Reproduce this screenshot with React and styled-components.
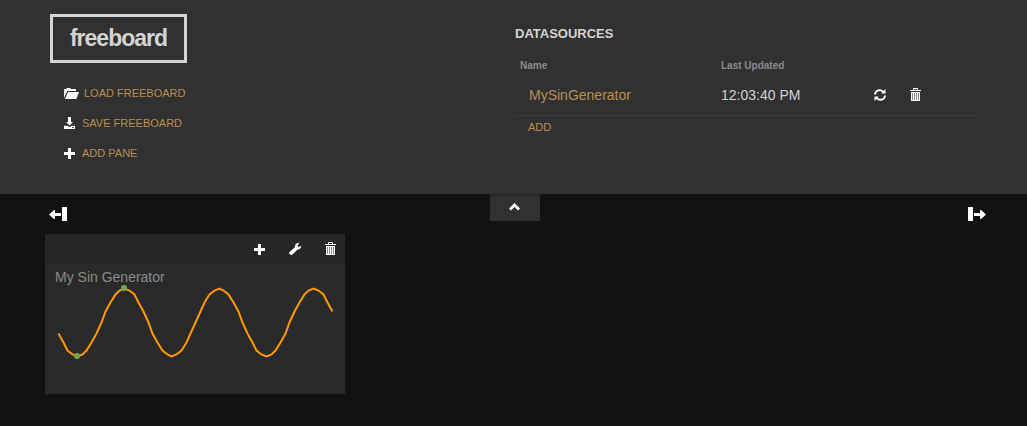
import React from "react";
import styled, { createGlobalStyle } from "styled-components";

const Global = createGlobalStyle`
  * { box-sizing: border-box; }
  body {
    margin: 0;
    background: #101214;
    color: #d3d4d4;
    font-family: "Liberation Sans", Arial, Helvetica, sans-serif;
    font-size: 14px;
    line-height: 20px;
    overflow: hidden;
  }
  svg { display: block; flex: none; }
`;

const Page = styled.div`
  height: 426px;
  background: #101214;
`;

const AdminBar = styled.header`
  display: flex;
  height: 194px;
  padding: 14px 47px 0 50px;
  background: #313131;
`;

const Tools = styled.div`
  width: 465px;
`;

const Logo = styled.h1`
  display: flex;
  align-items: center;
  justify-content: center;
  width: 137px;
  height: 49px;
  margin: 0 0 20px;
  padding: 0 0 1px;
  border: 3px solid #d3d4d4;
  font-size: 23px;
  font-weight: bold;
  letter-spacing: -1px;
`;

const Menu = styled.ul`
  margin: 0;
  padding: 0 0 0 14px;
  list-style: none;
`;

const MenuItem = styled.li`
  display: flex;
  align-items: center;
  gap: ${(p) => p.$gap}px;
  height: 20px;
  margin-bottom: 10px;
  color: #b88f51;
  font-size: 11px;
`;

const Sources = styled.section`
  width: 465px;
`;

const Heading = styled.h2`
  margin: 10px 0 12px;
  font-size: 13px;
  line-height: 20px;
`;

const Row = styled.div`
  display: grid;
  grid-template-columns: 206px 153px 36px 1fr;
  align-items: center;
`;

const HeadRow = styled(Row)`
  height: 19px;
  padding-left: 5px;
  grid-template-columns: 201px 1fr;
  color: #8b8b8b;
  font-size: 10px;
  font-weight: bold;
`;

const SourceRow = styled(Row)`
  height: 41px;
  border-bottom: 1px solid #3d3d3d;
`;

const SourceName = styled.span`
  padding-left: 14px;
  color: #b88f51;
`;

const AddLink = styled.div`
  padding: 1px 0 0 13px;
  color: #b88f51;
  font-size: 11px;
`;

const Controls = styled.div`
  display: grid;
  grid-template-columns: 441px 50px 1fr;
  height: 40px;
  padding: 0 41px 0 49px;
`;

const ColumnTool = styled.div`
  justify-self: ${(p) => (p.$end ? "end" : "start")};
  padding-top: 13px;
`;

const Toggle = styled.div`
  display: flex;
  justify-content: center;
  height: 27px;
  padding: 9px 1px 0 0;
  background: linear-gradient(#262626, #313131 4px);
`;

const Pane = styled.section`
  width: 300px;
  height: 160px;
  margin-left: 45px;
  background: #2a2a2a;
`;

const PaneHeader = styled.header`
  display: flex;
  align-items: center;
  justify-content: flex-end;
  height: 30px;
  padding-right: 9px;
  background: #272727;
`;

const PaneTool = styled.span`
  display: flex;
  justify-content: flex-start;
  width: ${(p) => p.$width}px;
`;

const WidgetTitle = styled.h3`
  margin: 0;
  padding: 3px 10px 0;
  color: #8b8b8b;
  font-size: 14px;
  font-weight: normal;
`;

const Chart = styled.svg`
  margin-left: 10px;
  overflow: visible;
`;

function Folder() {
  return (
    <svg width="15" height="11" viewBox="0 0 15 11" fill="#fff">
      <path d="M0 10V1.5L1 1h1l1-1h3l1 1h4.500l.5.5V3H3.200z" />
      <path d="M4 4h11l-2.700 7H1z" />
    </svg>
  );
}

function Save() {
  return (
    <svg width="11" height="12" viewBox="0 0 11 12" fill="#fff">
      <path d="M4 0h3v5h2L5.500 8.500 2 5h2z" />
      <path fillRule="evenodd" d="M0 8.800h3.300l1.200 1h2l1.200-1H11V12H0zM8 10v1h1.500v-1z" />
    </svg>
  );
}

function Plus() {
  return (
    <svg width="11" height="11" viewBox="0 0 11 11" fill="#fff">
      <path d="M4 0h3v4h4v3H7v4H4V7H0V4h4z" />
    </svg>
  );
}

function Trash() {
  return (
    <svg width="11" height="14" viewBox="0 0 11 14" fill="#fff">
      <path fillRule="evenodd" d="M3 2V.7L3.700 0h3.600L8 .7V2h3v1H0V2zM4 2h3V1H4z" />
      <path d="M1 4h9v9H1z" />
      <path d="M2 5h1v7H2zM4 5h1v7H4zM6 5h1v7H6zM8 5h1v7H8z" fill="#8c8c8c" />
    </svg>
  );
}

function Refresh() {
  return (
    <svg width="12" height="12" viewBox="0 0 12 12">
      <path d="M1 5.500C1.300 1.300 6.500-.3 9.300 2.900M11 6.500C10.700 10.700 5.500 12.300 2.700 9.100" fill="none" stroke="#fff" strokeWidth="1.900" />
      <path d="M11.500 0v4.500H7.200zM.5 12V7.500h4.300z" fill="#fff" />
    </svg>
  );
}

function Wrench() {
  return (
    <svg width="13" height="12" viewBox="0 0 13 12" fill="#fff">
      <path d="M10.400.3 8.600 2.200 9 3.600 10.400 3.900 12.100 2.500C12.400 5 10.600 6.700 8.500 6.500L3.500 11.400C1.800 12.800-.8 10.900.5 9L5.900 4.200C5.700 1.500 8-.5 10.400.3z" />
    </svg>
  );
}

function Chevron() {
  return (
    <svg width="11" height="8" viewBox="0 0 11 8">
      <path d="M1 6.500 5.500 2 10 6.500" fill="none" stroke="#fff" strokeWidth="2.800" />
    </svg>
  );
}

function ColumnArrow({ right }) {
  return (
    <svg width="18" height="14" viewBox="0 0 18 14" fill="#fff">
      <g transform={right ? "translate(18 0) scale(-1 1)" : undefined}>
        <path d="M13 0h5v14h-5zM0 7.500 5 3h1v3h6v3H6v3H5z" />
      </g>
    </svg>
  );
}

const WIDTH = 274;
const HEIGHT = 68;
const COUNT = 59;
const points = Array.from({ length: COUNT }, (_, i) => {
  const value = Math.cos(((i - 4) / 20) * Math.PI * 2);
  return [
    4 + Math.round((i / (COUNT - 1)) * WIDTH) - 0.5,
    1.5 + Math.round(((1 + value) / 2) * HEIGHT),
  ];
});

function Sparkline() {
  return (
    <Chart width="280" height="75" viewBox="0 0 280 75">
      <polyline
        points={points.map((p) => p.join(",")).join(" ")}
        fill="none"
        stroke="#ff9900"
        strokeWidth="2"
      />
      <circle cx="22" cy="69" r="3" fill="#74a948" />
      <circle cx="69" cy="1" r="3" fill="#74a948" />
    </Chart>
  );
}

export default function App() {
  return (
    <Page>
      <Global />
      <AdminBar>
        <Tools>
          <Logo>freeboard</Logo>
          <Menu>
            <MenuItem $gap={5}><Folder />LOAD FREEBOARD</MenuItem>
            <MenuItem $gap={7}><Save />SAVE FREEBOARD</MenuItem>
            <MenuItem $gap={7}><Plus />ADD PANE</MenuItem>
          </Menu>
        </Tools>
        <Sources>
          <Heading>DATASOURCES</Heading>
          <HeadRow><span>Name</span><span>Last Updated</span></HeadRow>
          <SourceRow>
            <SourceName>MySinGenerator</SourceName>
            <span>12:03:40 PM</span>
            <Refresh />
            <Trash />
          </SourceRow>
          <AddLink>ADD</AddLink>
        </Sources>
      </AdminBar>
      <Controls>
        <ColumnTool><ColumnArrow /></ColumnTool>
        <Toggle><Chevron /></Toggle>
        <ColumnTool $end><ColumnArrow right /></ColumnTool>
      </Controls>
      <Pane>
        <PaneHeader>
          <PaneTool $width={35}><Plus /></PaneTool>
          <PaneTool $width={36}><Wrench /></PaneTool>
          <PaneTool $width={11}><Trash /></PaneTool>
        </PaneHeader>
        <WidgetTitle>My Sin Generator</WidgetTitle>
        <Sparkline />
      </Pane>
    </Page>
  );
}
